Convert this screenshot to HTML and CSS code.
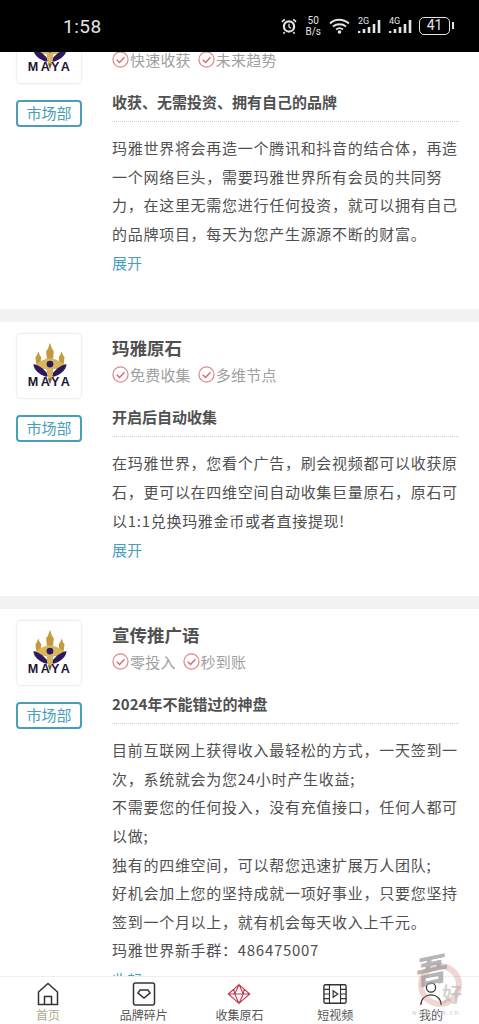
FILE: index.html
```html
<!DOCTYPE html>
<html>
	<head>
		<meta charset="UTF-8">
		<title>玛雅世界</title>
		<link rel="stylesheet" href="styles.css">
	</head>
	<body>
		<svg class="defs" width="0" height="0">
			<defs>
				<symbol id="check" viewBox="0 0 18 18">
					<circle cx="9" cy="9" r="8" fill="none" stroke="#dc8a8a" stroke-width="1.300"/>
					<path d="M5 9.200l3 3 5.200-5.600" fill="none" stroke="#d9666a" stroke-width="1.400"/>
				</symbol>
				<symbol id="maya" viewBox="0 0 66 66">
					<path d="M34 9l2 6 2 3-1 9h-6l-1-9 2-3z" fill="#c59a3e"/>
					<path d="M22 18l1.500 4 1.500 2-1 8h-4l-1-8 1.500-2zM46 18l1.500 4 1.500 2-1 8h-4l-1-8 1.500-2z" fill="#c59a3e"/>
					<path d="M19 32c5-4 10-7 15-7s10 3 15 7l-4 4H23z" fill="#d8b560"/>
					<path d="M33 43C29 37 24 33 17 31c0 6 6 11 13 13zM35 43c4-6 9-10 16-12 0 6-6 11-13 13z" fill="#2c1b5c"/>
					<path d="M30 32h8l-1 10-3 8-3-8z" fill="#d8b560"/>
					<circle cx="34" cy="31" r="3.500" fill="#2c1b5c"/>
					<path d="M34 52l-2-6h4z" fill="#7a5a2a"/>
					<text x="34" y="54" text-anchor="middle" class="maya-text">MAYA</text>
				</symbol>
			</defs>
		</svg>

		<div class="phone">
			<div class="status">
				<span class="time">1:58</span>
				<div class="status-icons">
					<svg width="16" height="16" viewBox="0 0 17 17">
						<circle cx="8.500" cy="9" r="5.400" fill="none" stroke="#e4e4e4" stroke-width="2.400"/>
						<path d="M8.500 6v3.400l2 1.600" fill="none" stroke="#e4e4e4" stroke-width="1.400"/>
						<path d="M1 4l3-2.500M16 4l-3-2.500M4 15l-1.500 1.500M13 15l1.500 1.500" stroke="#e4e4e4" stroke-width="1.800"/>
					</svg>
					<span class="speed">50<br>B/s</span>
					<svg width="21" height="16" viewBox="0 0 21 16">
						<path d="M1 5.500c5-5 13-5 19 0M4 8.500c3.500-3 9.500-3 13 0M7 11.500c2-1.500 5-1.500 7 0" fill="none" stroke="#e4e4e4" stroke-width="1.800"/>
						<circle cx="10.500" cy="14" r="1.800" fill="#e4e4e4"/>
					</svg>
					<span class="signal"><i class="net">2G</i><svg width="23" height="16" viewBox="0 0 23 16"><path d="M1 13v2M6 11v4M11 9v6M16 6v9M21 2v13" stroke="#e4e4e4" stroke-width="2.600"/></svg></span>
					<span class="signal"><i class="net">4G</i><svg width="23" height="16" viewBox="0 0 23 16"><path d="M1 13v2M6 11v4M11 9v6M16 6v9M21 2v13" stroke="#e4e4e4" stroke-width="2.600"/></svg></span>
					<span class="battery"><b>41</b></span>
				</div>
			</div>

			<div class="content">
				<div class="card first">
					<div class="side">
						<svg class="logo"><use href="#maya"/></svg>
						<span class="dept">市场部</span>
					</div>
					<div class="main">
						<h2>品牌项目</h2>
						<div class="tags">
							<span class="tag"><svg><use href="#check"/></svg>快速收获</span>
							<span class="tag"><svg><use href="#check"/></svg>未来趋势</span>
						</div>
						<h3>收获、无需投资、拥有自己的品牌</h3>
						<p>玛雅世界将会再造一个腾讯和抖音的结合体，再造一个网络巨头，需要玛雅世界所有会员的共同努力，在这里无需您进行任何投资，就可以拥有自己的品牌项目，每天为您产生源源不断的财富。</p>
						<a class="more">展开</a>
					</div>
				</div>

				<div class="card">
					<div class="side">
						<svg class="logo"><use href="#maya"/></svg>
						<span class="dept">市场部</span>
					</div>
					<div class="main">
						<h2>玛雅原石</h2>
						<div class="tags">
							<span class="tag"><svg><use href="#check"/></svg>免费收集</span>
							<span class="tag"><svg><use href="#check"/></svg>多维节点</span>
						</div>
						<h3>开启后自动收集</h3>
						<p>在玛雅世界，您看个广告，刷会视频都可以收获原石，更可以在四维空间自动收集巨量原石，原石可以1:1兑换玛雅金币或者直接提现!</p>
						<a class="more">展开</a>
					</div>
				</div>

				<div class="card">
					<div class="side">
						<svg class="logo"><use href="#maya"/></svg>
						<span class="dept">市场部</span>
					</div>
					<div class="main">
						<h2>宣传推广语</h2>
						<div class="tags">
							<span class="tag"><svg><use href="#check"/></svg>零投入</span>
							<span class="tag"><svg><use href="#check"/></svg>秒到账</span>
						</div>
						<h3>2024年不能错过的神盘</h3>
						<p>目前互联网上获得收入最轻松的方式，一天签到一次，系统就会为您24小时产生收益;<br>不需要您的任何投入，没有充值接口，任何人都可以做;<br>独有的四维空间，可以帮您迅速扩展万人团队;<br>好机会加上您的坚持成就一项好事业，只要您坚持签到一个月以上，就有机会每天收入上千元。<br>玛雅世界新手群：486475007</p>
						<a class="more">收起</a>
					</div>
				</div>
			</div>

			<div class="tabbar">
				<div class="tab active">
					<svg viewBox="0 0 24 24"><path d="M2.500 10L12 1.500l9.500 8.500v12.500h-19zM8.500 22.500v-8h7v8" fill="none" stroke="#333" stroke-width="1.500"/></svg>
					<span>首页</span>
				</div>
				<div class="tab">
					<svg viewBox="0 0 24 24"><rect x="1.500" y="1" width="21" height="22" rx="2" fill="none" stroke="#333" stroke-width="1.500"/><path d="M8 8h8l2 3-6 5-6-5z" fill="none" stroke="#333" stroke-width="1.500"/></svg>
					<span>品牌碎片</span>
				</div>
				<div class="tab">
					<svg viewBox="0 0 28 24"><path d="M14 1l12.500 11L14 23 1.500 12zM1.500 12h25M14 1L9 12l5 11 5-11zM8 6.500L9 12M20 6.500L19 12" fill="none" stroke="#c22f4a" stroke-width="1.200"/></svg>
					<span>收集原石</span>
				</div>
				<div class="tab">
					<svg viewBox="0 0 26 24"><rect x="1" y="2" width="24" height="20" rx="1.500" fill="none" stroke="#333" stroke-width="1.500"/><path d="M7 2v20M19 2v20M1 7h6M1 12h6M1 17h6M19 7h6M19 12h6M19 17h6" fill="none" stroke="#333" stroke-width="1.200"/><path d="M11 8.500l5 3.500-5 3.500z" fill="none" stroke="#333" stroke-width="1.300"/></svg>
					<span>短视频</span>
				</div>
				<div class="tab">
					<svg viewBox="0 0 26 26"><circle cx="13" cy="6" r="5" fill="none" stroke="#333" stroke-width="1.300"/><path d="M2 25c0-7 5-11 11-11s11 4 11 11" fill="none" stroke="#333" stroke-width="1.300"/></svg>
					<span>我的</span>
				</div>
			</div>

			<div class="stamp">
				<span class="stamp-ring"></span>
				<span class="stamp-char">吾</span>
				<span class="stamp-char2">好</span>
				<span class="stamp-url">www.mw.cn</span>
			</div>
		</div>
	</body>
</html>
```

FILE: styles.css
```css
* {
	box-sizing: border-box;
}

body {
	margin: 0;
	padding: 0;
	background: #fff;
	font-family: "Noto Sans CJK SC", "Noto Sans", sans-serif;
}

.defs {
	display: block;
	height: 0;
}

.maya-text {
	font-family: "Liberation Sans", sans-serif;
	font-size: 13px;
	font-weight: bold;
	letter-spacing: 2.500px;
	fill: #1d1638;
}

.phone {
	position: relative;
	width: 479px;
	height: 1024px;
	display: flex;
	flex-direction: column;
	overflow: hidden;
}

/* status bar */
.status {
	height: 52px;
	flex: none;
	background: #000;
	color: #e4e4e4;
	display: flex;
	align-items: center;
	justify-content: space-between;
	padding: 0 26px 0 63px;
	position: relative;
	z-index: 2;
}

.time {
	font-family: Roboto, sans-serif;
	font-size: 19px;
	letter-spacing: 0.500px;
}

.status-icons {
	display: flex;
	align-items: center;
	gap: 8px;
}

.speed {
	font-family: Roboto, sans-serif;
	font-size: 10px;
	line-height: 11px;
	text-align: center;
}

.signal {
	display: flex;
	align-items: flex-start;
	position: relative;
	width: 23px;
	height: 16px;
}

.net {
	position: absolute;
	left: 0;
	top: -1px;
	font-family: Roboto, sans-serif;
	font-style: normal;
	font-size: 9px;
	line-height: 9px;
}

.battery {
	width: 31px;
	height: 18px;
	border: 1.500px solid #e4e4e4;
	border-radius: 5px;
	font-family: Roboto, sans-serif;
	font-size: 14px;
	line-height: 15px;
	text-align: center;
	margin-right: 3px;
	margin-left: -1px;
	position: relative;
}

.battery b {
	font-weight: normal;
}

.battery::after {
	content: "";
	position: absolute;
	right: -5px;
	top: 4px;
	width: 2px;
	height: 7px;
	background: #e4e4e4;
}

/* list */
.content {
	flex: 1;
	overflow: hidden;
	min-height: 0;
}

.card {
	display: flex;
	gap: 30px;
	padding: 11px 20px 33px 16px;
	border-bottom: 13px solid #f2f2f2;
}

.first {
	margin-top: -45px;
}

.side {
	width: 66px;
	flex: none;
	display: flex;
	flex-direction: column;
	gap: 16px;
}

.logo {
	width: 66px;
	height: 66px;
	border: 1px solid #eee;
	border-radius: 5px;
	box-shadow: 0 0 2px #eee;
}

.dept {
	height: 27px;
	border: 2px solid #4a9dbb;
	border-radius: 4px;
	color: #4a9dbb;
	font-size: 15px;
	line-height: 21px;
	text-align: center;
}

.main {
	flex: 1;
	min-width: 0;
}

h2 {
	margin: 0;
	font-size: 17.500px;
	line-height: 30px;
	font-weight: 700;
	color: #505050;
}

.tags {
	display: flex;
	gap: 7px;
	height: 22px;
	align-items: center;
}

.tag {
	display: flex;
	align-items: center;
	gap: 1px;
	font-size: 15px;
	letter-spacing: 0.200px;
	color: #a0a0a0;
}

.tag svg {
	width: 17px;
	height: 17px;
}

h3 {
	margin: 18px 0 0;
	height: 34px;
	border-bottom: 1px dotted #ccc;
	font-size: 15px;
	line-height: 27px;
	font-weight: 700;
	color: #505050;
}

p {
	margin: 12px 0 0;
	font-size: 15px;
	line-height: 28.600px;
	letter-spacing: 0.720px;
	color: #505050;
}

.more {
	display: block;
	margin-top: 2px;
	font-size: 15px;
	line-height: 26px;
	color: #4a9dbb;
}

/* bottom tabs */
.tabbar {
	height: 48px;
	flex: none;
	background: #fff;
	border-top: 1px solid #eee;
	display: flex;
	position: relative;
	z-index: 2;
}

.tab {
	flex: 1;
	display: flex;
	flex-direction: column;
	align-items: center;
	padding-top: 5px;
	font-size: 12px;
	line-height: 16px;
	color: #555;
}

.tab svg {
	width: 24px;
	height: 24px;
	margin-bottom: 1px;
}

.active {
	color: #b5a68a;
}

/* watermark */
.stamp {
	position: absolute;
	left: 418px;
	top: 950px;
	width: 56px;
	height: 70px;
	z-index: 3;
	pointer-events: none;
}

.stamp-ring {
	position: absolute;
	left: 0;
	top: 13px;
	width: 44px;
	height: 44px;
	border: 6px solid rgba(205, 120, 110, 0.300);
	border-radius: 50%;
}

.stamp-char {
	position: absolute;
	left: -2px;
	top: 0;
	font-size: 32px;
	line-height: 36px;
	font-weight: 900;
	color: rgba(150, 150, 150, 0.700);
	transform: skewY(-12deg);
}

.stamp-char2 {
	position: absolute;
	left: 24px;
	top: 32px;
	font-size: 20px;
	line-height: 24px;
	font-weight: 700;
	color: rgba(170, 170, 170, 0.500);
}

.stamp-url {
	position: absolute;
	left: -6px;
	top: 58px;
	font-size: 6px;
	letter-spacing: 1.500px;
	color: #ccc;
}
```
